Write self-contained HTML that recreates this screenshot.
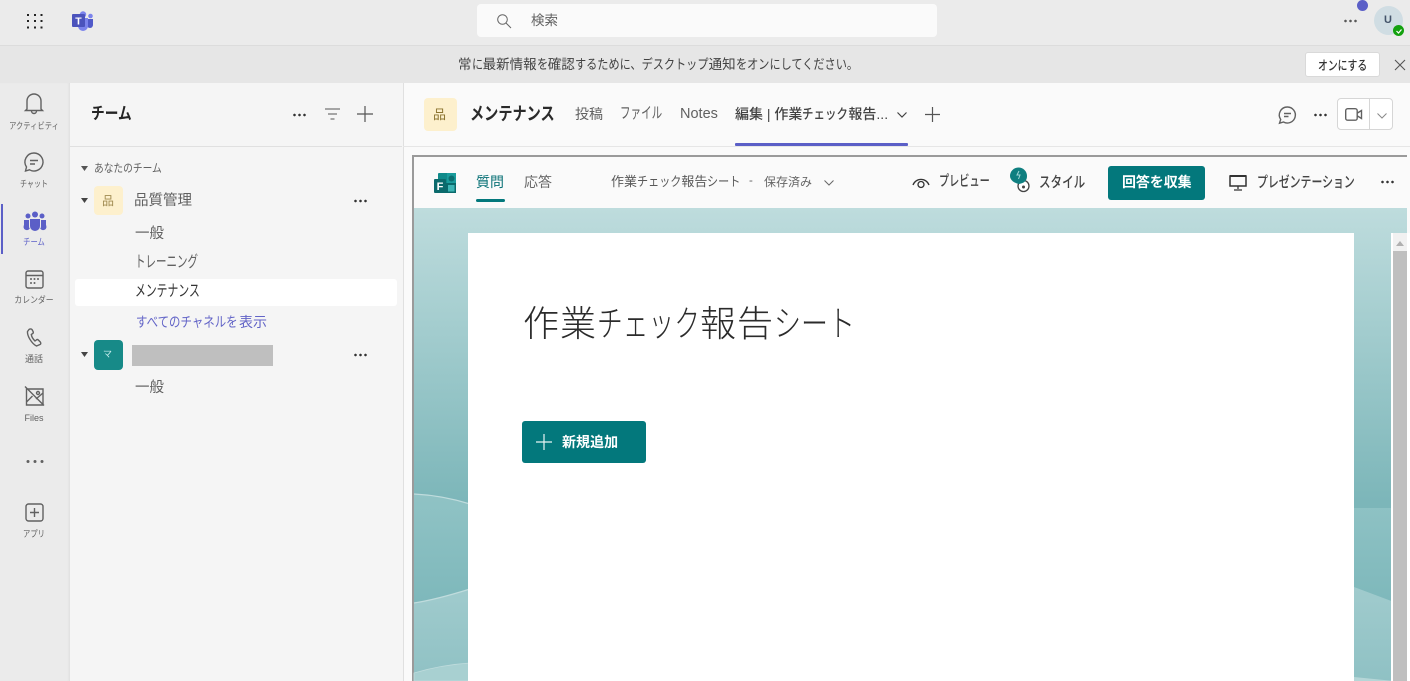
<!DOCTYPE html>
<html lang="ja"><head><meta charset="utf-8"><title>Teams</title>
<style>
html,body{margin:0;padding:0;width:1410px;height:681px;overflow:hidden;background:#f5f5f5}
body{position:relative;font-family:"Liberation Sans","Noto Sans CJK JP",sans-serif;color:#424242}
.a{position:absolute}
.t{position:absolute;white-space:nowrap;line-height:1;transform-origin:left center}
svg{position:absolute;overflow:visible}
.r{color:#616161;font-size:9px;width:68px;text-align:center;left:0;transform-origin:center center}
.i{fill:none;stroke:#616161;stroke-width:1.4}
.dots{position:absolute;width:15px;height:4px;background:radial-gradient(circle at center,#333 1.1px,transparent 1.5px) 0 0/5px 4px repeat-x}
.s{display:inline-block;transform-origin:left center}
</style></head><body>

<!-- top bar -->
<div class="a" style="left:0;top:0;width:1410px;height:45px;background:#ebebeb;border-bottom:1px solid #dcdcdc"></div>
<svg style="left:26px;top:13px" width="17" height="17" fill="#222"><g>
<rect x="1" y="1" width="2" height="2"/><rect x="8" y="1" width="2" height="2"/><rect x="14.500" y="1" width="2" height="2"/>
<rect x="1" y="7" width="2" height="2"/><rect x="8" y="7" width="2" height="2"/><rect x="14.500" y="7" width="2" height="2"/>
<rect x="1" y="13.500" width="2" height="2"/><rect x="8" y="13.500" width="2" height="2"/><rect x="14.500" y="13.500" width="2" height="2"/></g></svg>
<svg style="left:71px;top:11px" width="23" height="20">
<circle cx="19.500" cy="5" r="2.300" fill="#7b83eb"/><path d="M16 8h6v6a3 3 0 0 1-6 0z" fill="#5059c9"/>
<circle cx="12" cy="3.500" r="3.200" fill="#7b83eb"/><path d="M7 7h10v8a5 5 0 0 1-10 0z" fill="#7b83eb"/>
<rect x="1" y="3" width="13" height="13" rx="1" fill="#4b53bc"/>
<text x="7.500" y="13.500" font-size="10.500" font-weight="700" fill="#fff" text-anchor="middle" font-family="Liberation Sans">T</text></svg>
<div class="a" style="left:477px;top:4px;width:460px;height:33px;background:#fafafa;border-radius:4px"></div>
<svg style="left:497px;top:14px" width="16" height="16"><circle cx="5.500" cy="5.500" r="4.800" fill="none" stroke="#666" stroke-width="1"/><path d="M9 9l5 5" stroke="#666" stroke-width="1"/></svg>
<div class="t" style="left:531px;top:14px;font-size:13.500px;color:#616161">検索</div>
<div class="dots" style="left:1343px;top:19px;opacity:.8"></div>
<div class="a" style="left:1357px;top:0;width:11px;height:11px;border-radius:50%;background:#5b5fc7"></div>
<div class="a" style="left:1374px;top:6px;width:29px;height:29px;border-radius:50%;background:#d0dde3"></div>
<div class="t" style="left:1384px;top:15px;font-size:11px;font-weight:700;color:#44546a">U</div>
<div class="a" style="left:1393px;top:25px;width:11px;height:11px;border-radius:50%;background:#13a10e"></div>
<svg style="left:1395px;top:27px" width="8" height="8"><path d="M1.500 4l2 2 3-3.500" fill="none" stroke="#fff" stroke-width="1.200"/></svg>

<!-- notification bar -->
<div class="a" style="left:0;top:46px;width:1410px;height:37px;background:#e6e6e6"></div>
<div class="t" style="left:458px;top:58px;font-size:13.500px;color:#424242">常<span class="s" style="width:11.150px;transform:scaleX(.826)">に</span>最新情報<span class="s" style="width:11.150px;transform:scaleX(.826)">を</span>確認<span class="s" style="width:133.800px;transform:scaleX(.826)">するために、デスクトップ</span>通知<span class="s" style="width:122.650px;transform:scaleX(.826)">をオンにしてください。</span></div>
<div class="a" style="left:1305px;top:52px;width:73px;height:23px;background:#fff;border:1px solid #d9d9d9;border-radius:3px"></div>
<div class="t" style="left:1318px;top:59px;font-size:13px;font-weight:500;color:#333;transform:scaleX(.755)">オンにする</div>
<svg style="left:1394px;top:59px" width="12" height="12"><path d="M1 1l10 10M11 1L1 11" stroke="#555" stroke-width="1.100"/></svg>

<!-- left rail -->
<div class="a" style="left:0;top:83px;width:70px;height:598px;background:#ebebeb;box-shadow:inset -2px 0 2px -1px #ddd"></div>
<div class="a" style="left:1px;top:204px;width:2px;height:50px;background:#5b5fc7"></div>

<svg style="left:24px;top:93px" width="20" height="22" class="i"><path d="M3 16V8a7 7 0 0 1 14 0v8l1.500 1.500h-17zM7.500 18a2.500 2.500 0 0 0 5 0"/></svg>
<div class="t r" style="top:122px;transform:scaleX(.81)">アクティビティ</div>
<svg style="left:24px;top:152px" width="20" height="20" class="i"><path d="M10 1a9 9 0 1 1-4.500 16.800L1.500 19l1-4A9 9 0 0 1 10 1zM6 8.500h8M6 12h5"/></svg>
<div class="t r" style="top:180px;transform:scaleX(.78)">チャット</div>
<svg style="left:24px;top:211px" width="22" height="20" fill="#5b5fc7"><circle cx="11" cy="3.500" r="3"/><circle cx="4" cy="5" r="2.500"/><circle cx="18" cy="5" r="2.500"/><path d="M6 8h10v7a5 5 0 0 1-10 0z"/><path d="M0 9h5v6a3 3 0 0 0 .8 2.500A3 3 0 0 1 0 14zM22 9h-5v6a3 3 0 0 1-.8 2.500A3 3 0 0 0 22 14z"/></svg>
<div class="t r" style="top:238px;color:#5b5fc7;transform:scaleX(.81)">チーム</div>
<svg style="left:25px;top:270px" width="19" height="19" class="i"><rect x="1" y="1" width="17" height="17" rx="2"/><path d="M1 5.500h17"/><g fill="#616161" stroke="none"><circle cx="6" cy="9" r="1"/><circle cx="9.500" cy="9" r="1"/><circle cx="13" cy="9" r="1"/><circle cx="6" cy="13" r="1"/><circle cx="9.500" cy="13" r="1"/></g></svg>
<div class="t r" style="top:296px;transform:scaleX(.87)">カレンダー</div>
<svg style="left:26px;top:328px" width="17" height="20" class="i"><path d="M3 1.500L1.500 3.500c-.5 4 4 12 9 14.500l3.500-1.500c1-.5 1-1.500.3-2.500l-2-2c-.6-.6-1.300-.6-2 0l-1.300 1C7 11 5.500 8 5.300 6.500l1.500-1c.6-.5.6-1.200.3-2L6 1.500C5.500.8 4 .8 3 1.500z"/></svg>
<div class="t r" style="top:355px">通話</div>
<svg style="left:25px;top:386px" width="19" height="20" class="i"><path d="M1.500 3h16.500v16H1.500zM0 .5l19 19M1.500 16l6-6M11 13l7-6"/><circle cx="13" cy="7" r="1.500"/></svg>
<div class="t r" style="top:414px">Files</div>
<svg style="left:26px;top:459px" width="18" height="5" fill="#616161"><circle cx="2" cy="2.500" r="1.500"/><circle cx="9" cy="2.500" r="1.500"/><circle cx="16" cy="2.500" r="1.500"/></svg>
<svg style="left:25px;top:503px" width="19" height="19" class="i"><rect x="1" y="1" width="17" height="17" rx="2.500"/><path d="M9.500 5v9M5 9.500h9"/></svg>
<div class="t r" style="top:530px;transform:scaleX(.81)">アプリ</div>

<!-- team list -->
<div class="a" style="left:70px;top:83px;width:332px;height:598px;background:#f5f5f5"></div>
<div class="a" style="left:70px;top:146px;width:332px;height:1px;background:#e0e0e0"></div>
<div class="t" style="left:91px;top:106px;font-size:16.500px;font-weight:700;color:#242424;transform:scaleX(.83)">チーム</div>
<div class="dots" style="left:292px;top:113px"></div>
<svg style="left:325px;top:108px" width="15" height="12"><path d="M0 1h15M3 6h9M5.500 11h4" stroke="#555" stroke-width="1.100"/></svg>
<svg style="left:357px;top:106px" width="16" height="16"><path d="M8 0v16M0 8h16" stroke="#555" stroke-width="1.200"/></svg>

<svg style="left:81px;top:166px" width="7" height="5"><path d="M0 0h7L3.500 5z" fill="#555"/></svg>
<div class="t" style="left:94px;top:164px;font-size:11.500px;color:#616161;transform:scaleX(.845)">あなたのチーム</div>
<svg style="left:81px;top:198px" width="7" height="5"><path d="M0 0h7L3.500 5z" fill="#444"/></svg>
<div class="a" style="left:94px;top:186px;width:29px;height:29px;border-radius:4px;background:#fdf0cd"></div>
<div class="t" style="left:102px;top:195px;font-size:12px;color:#a08a50">品</div>
<div class="t" style="left:134px;top:193.500px;font-size:14.500px;color:#616161">品質管理</div>
<div class="dots" style="left:353px;top:199px"></div>
<div class="t" style="left:135px;top:227px;font-size:14.500px;color:#616161">一般</div>
<div class="t" style="left:135px;top:255px;font-size:16px;color:#616161;transform:scaleX(.656)">トレーニング</div>
<div class="a" style="left:75px;top:279px;width:322px;height:27px;background:#fff;border-radius:3px"></div>
<div class="t" style="left:135px;top:284px;font-size:16px;color:#333;transform:scaleX(.677)">メンテナンス</div>
<div class="t" style="left:136px;top:315px;font-size:14px;color:#6264c7"><span class="s" style="width:103px;transform:scaleX(.817)">すべてのチャネルを</span>表示</div>
<svg style="left:81px;top:352px" width="7" height="5"><path d="M0 0h7L3.500 5z" fill="#444"/></svg>
<div class="a" style="left:94px;top:340px;width:29px;height:30px;border-radius:4px;background:#178a88"></div>
<div class="t" style="left:103px;top:350px;font-size:9px;color:#c8eeee">マ</div>
<div class="a" style="left:132px;top:345px;width:141px;height:21px;background:#bfbfbf"></div>
<div class="dots" style="left:353px;top:353px"></div>
<div class="t" style="left:135px;top:381px;font-size:14.500px;color:#616161">一般</div>

<!-- main header -->
<div class="a" style="left:403px;top:83px;width:1007px;height:598px;background:#fafafa;border-left:1px solid #e0e0e0;box-sizing:border-box"></div>
<div class="a" style="left:403px;top:146px;width:1007px;height:1px;background:#e6e6e6"></div>
<div class="a" style="left:424px;top:98px;width:33px;height:33px;border-radius:4px;background:#fdf0cd"></div>
<div class="t" style="left:433px;top:108px;font-size:13px;color:#8c7430">品</div>
<div class="t" style="left:470px;top:105px;font-size:18px;font-weight:700;color:#2a2a2a;transform:scaleX(.787)">メンテナンス</div>
<div class="t" style="left:575px;top:107px;font-size:14px;color:#616161">投稿</div>
<div class="t" style="left:620px;top:106px;font-size:15.500px;color:#616161;transform:scaleX(.68)">ファイル</div>
<div class="t" style="left:680px;top:107px;font-size:14.500px;color:#616161">Notes</div>
<div class="t" style="left:735px;top:107px;font-size:14px;font-weight:500;color:#424242">編集 | 作業<span class="s" style="width:46px;transform:scaleX(.82)">チェック</span>報告...</div>
<svg style="left:897px;top:112px" width="10" height="6"><path d="M.5.500L5 5 9.500.500" fill="none" stroke="#424242" stroke-width="1.200"/></svg>
<div class="a" style="left:735px;top:143px;width:173px;height:3px;background:#5b5fc7;border-radius:1px"></div>
<svg style="left:925px;top:107px" width="15" height="15"><path d="M7.500 0v15M0 7.500h15" stroke="#555" stroke-width="1.200"/></svg>
<svg style="left:1278px;top:106px" width="18" height="18" class="i"><path d="M9.500 1a8 8 0 1 1-4 15l-4 1.200 1.200-3.700A8 8 0 0 1 9.500 1zM6 7.500h7M6 10.500h4.500"/></svg>
<div class="dots" style="left:1313px;top:113px"></div>
<div class="a" style="left:1337px;top:98px;width:56px;height:32px;box-sizing:border-box;background:#fff;border:1px solid #d6d6d6;border-radius:4px"></div>
<div class="a" style="left:1369px;top:98px;width:1px;height:32px;background:#d6d6d6"></div>
<svg style="left:1345px;top:108px" width="18" height="13" class="i"><rect x=".7" y=".7" width="11.500" height="11.500" rx="2"/><path d="M12.500 5l4-2.500v8l-4-2.500"/></svg>
<svg style="left:1377px;top:113px" width="10" height="6"><path d="M.5.500L5 5 9.500.500" fill="none" stroke="#888" stroke-width="1"/></svg>

<!-- forms frame -->
<div class="a" style="left:412px;top:155px;width:995px;height:526px;box-sizing:border-box;border-top:2px solid #9a9a9a;border-left:2px solid #9a9a9a;background:#fafafa"></div>
<svg style="left:434px;top:173px" width="22" height="22">
<rect x="4" y="0" width="18" height="20" rx="1" fill="#0f8a8a"/><rect x="13" y="0" width="9" height="10" fill="#1a9c9c"/><rect x="4" y="10" width="18" height="10" fill="#0a6a6c"/><circle cx="17.500" cy="5.500" r="3" fill="#0b6f70"/><rect x="14" y="12" width="6.500" height="6.500" fill="#3db5b5"/>
<rect x="0" y="6" width="12" height="14" rx="1" fill="#0b6a6c"/><text x="6" y="17" font-size="11" font-weight="700" fill="#fff" text-anchor="middle" font-family="Liberation Sans">F</text></svg>
<div class="t" style="left:476px;top:175px;font-size:14px;color:#0b7277">質問</div>
<div class="a" style="left:476px;top:199px;width:29px;height:3px;background:#03787c;border-radius:2px"></div>
<div class="t" style="left:524px;top:175px;font-size:14px;color:#666">応答</div>
<div class="t" style="left:611px;top:175px;font-size:13px;color:#595959">作業<span class="s" style="width:44.400px;transform:scaleX(.854)">チェック</span>報告<span class="s" style="width:33.300px;transform:scaleX(.854)">シート</span></div>
<div class="t" style="left:749px;top:176px;font-size:11.500px;color:#666">-</div>
<div class="t" style="left:764px;top:176px;font-size:12px;color:#666">保存済み</div>
<svg style="left:824px;top:180px" width="10" height="6"><path d="M.5.500L5 5 9.500.500" fill="none" stroke="#666" stroke-width="1"/></svg>

<svg style="left:912px;top:177px" width="18" height="12"><path d="M1 8a8.500 8.500 0 0 1 16 0" fill="none" stroke="#333" stroke-width="1.300"/><circle cx="9" cy="7.500" r="3" fill="none" stroke="#333" stroke-width="1.300"/></svg>
<div class="t" style="left:939px;top:175px;font-size:14.500px;font-weight:500;color:#444;transform:scaleX(.70)">プレビュー</div>
<svg style="left:1009px;top:167px" width="22" height="25"><circle cx="14.500" cy="19" r="5.500" fill="#fff" stroke="#444" stroke-width="1.300"/><circle cx="14.500" cy="20" r="1.500" fill="#444"/><path d="M1 9a8.500 8.500 0 0 1 17 0c0 4-2 7-8 8-5-1-9-4-9-8z" fill="#0f7f80"/><path d="M10 4l-2 4h3l-1.500 4" fill="none" stroke="#9fd6d6" stroke-width="1"/></svg>
<div class="t" style="left:1039px;top:175px;font-size:15px;font-weight:500;color:#444;transform:scaleX(.77)">スタイル</div>
<div class="a" style="left:1108px;top:166px;width:97px;height:34px;border-radius:3px;background:#03787c"></div>
<div class="t" style="left:1122px;top:175px;color:#fff;font-size:14px;font-weight:700;letter-spacing:-.1px">回答を収集</div>
<svg style="left:1229px;top:175px" width="18" height="16"><path d="M1 1h16v10H1z" fill="none" stroke="#333" stroke-width="1.500"/><path d="M1 1h16" stroke="#333" stroke-width="2"/><path d="M9 11v3M5 15h8" stroke="#333" stroke-width="1.300"/></svg>
<div class="t" style="left:1257px;top:175px;font-size:15px;font-weight:500;color:#444;transform:scaleX(.726)">プレゼンテーション</div>
<div class="dots" style="left:1380px;top:180px"></div>

<!-- themed background -->
<svg style="left:414px;top:208px" width="993" height="473" viewBox="0 0 993 473">
<defs>
<linearGradient id="g1" gradientUnits="userSpaceOnUse" x1="0" y1="0" x2="0" y2="295"><stop offset="0" stop-color="#bedcdd"/><stop offset="1" stop-color="#7cb6b9"/></linearGradient>
<linearGradient id="g2" gradientUnits="userSpaceOnUse" x1="0" y1="286" x2="0" y2="394"><stop offset="0" stop-color="#90c3c5"/><stop offset="1" stop-color="#7eb8bb"/></linearGradient>
<linearGradient id="g3" gradientUnits="userSpaceOnUse" x1="0" y1="380" x2="0" y2="473"><stop offset="0" stop-color="#a0cbcd"/><stop offset="1" stop-color="#8fc1c4"/></linearGradient>
</defs>
<rect width="993" height="473" fill="url(#g1)"/>
<path d="M0 286C20 287 40 291 56 296V473H0z" fill="url(#g2)"/>
<path d="M0 395C20 392 40 386 56 381V473H0z" fill="url(#g3)"/>
<path d="M0 286C20 287 40 291 56 296" fill="none" stroke="#c0dcdd" stroke-width="1.200"/>
<path d="M0 395C20 392 40 386 56 381" fill="none" stroke="#c0dcdd" stroke-width="1.200"/>
<path d="M0 465C20 459 40 456 56 455V473H0z" fill="#a8d0d1" stroke="#c0dcdd" stroke-width=".8"/>
<path d="M940 300H980V473H940z" fill="url(#g2)"/>
<path d="M940 379L980 394V473H940z" fill="url(#g3)"/>
<path d="M940 469L980 473H940z" fill="#b5d6d7"/>
</svg>
<div class="a" style="left:468px;top:233px;width:886px;height:448px;background:#fff"></div>
<div class="a" style="left:1391px;top:233px;width:19px;height:448px;background:#fff"></div>
<div class="a" style="left:1393px;top:233px;width:14px;height:448px;background:#f1f1f1"></div>
<div class="a" style="left:1393px;top:251px;width:14px;height:430px;background:#bfbfbf"></div>
<svg style="left:1396px;top:241px" width="8" height="5"><path d="M4 0l4 5H0z" fill="#b0b0b0"/></svg>

<div class="t" style="left:523px;top:306px;font-size:36px;color:#2b2b2b;font-weight:300"><span style="letter-spacing:1px">作業</span><span class="s" style="width:103px;transform:scaleX(.715)">チェック</span><span style="letter-spacing:1px">報告</span><span class="s" style="width:81px;transform:scaleX(.75)">シート</span></div>
<div class="a" style="left:522px;top:421px;width:124px;height:42px;border-radius:3px;background:#03787c"></div>
<svg style="left:536px;top:434px" width="16" height="16"><path d="M8 0v16M0 8h16" stroke="#e8f4f4" stroke-width="1.200"/></svg>
<div class="t" style="left:562px;top:435px;font-size:14px;font-weight:700;color:#fff;letter-spacing:.05px">新規追加</div>
</body></html>
